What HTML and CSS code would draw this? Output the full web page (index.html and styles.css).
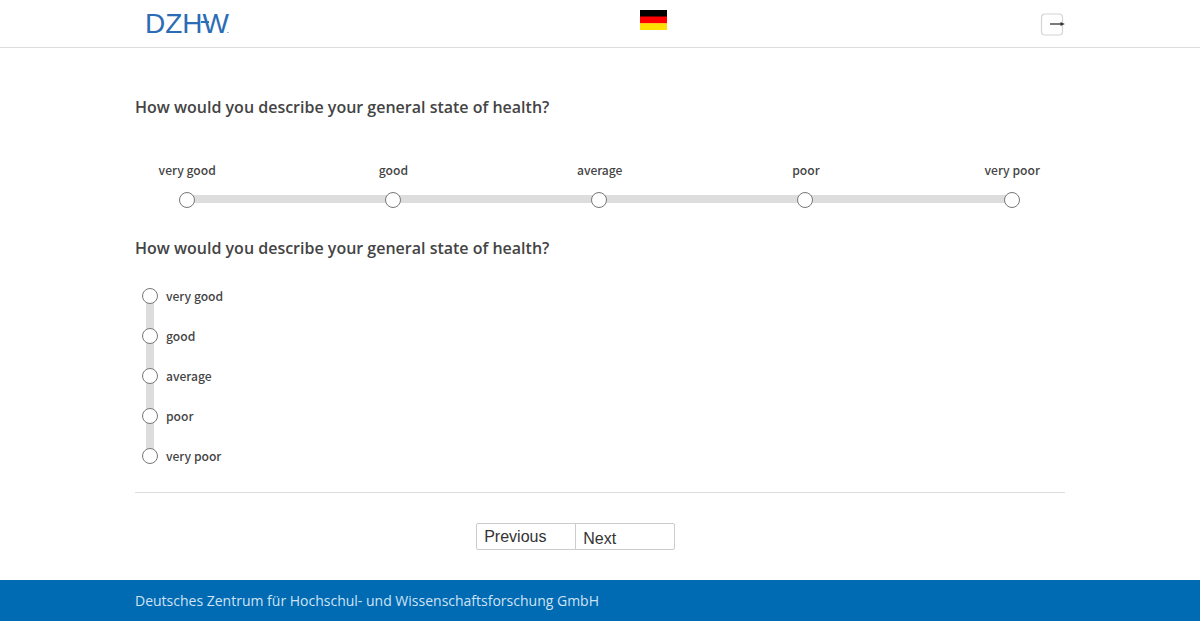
FILE: index.html
```html
<!DOCTYPE html>
<html lang="en">
<head>
<meta charset="utf-8">
<title>DZHW survey</title>
<link rel="stylesheet" href="styles.css">
</head>
<body>
<header class="site-header">
  <div class="header-inner">
    <div class="logo"><span class="logo-text">DZH</span><span class="logo-w">W</span><span class="logo-dot">.</span></div>
    <svg class="flag" width="27" height="20" viewBox="0 0 27 20" aria-label="Deutsch"><rect width="27" height="7" fill="#000"/><rect y="6.5" width="27" height="7" fill="#f00"/><rect y="13.3" width="27" height="6.7" fill="#ffdf00"/></svg>
    <svg class="logout" width="25" height="23" viewBox="0 0 25 23" aria-label="Logout">
      <rect x="1.5" y="1" width="21" height="21" rx="3.5" fill="#fff" stroke="#d4d4d4" stroke-width="1.2"/>
      <path d="M10 11H21" stroke="#333" stroke-width="1.3" fill="none"/>
      <path d="M20.5 9L24.8 11L20.5 13Z" fill="#333"/>
    </svg>
  </div>
</header>
<main class="content">
  <h2 class="question q-first">How would you describe your general state of health?</h2>
  <div class="hscale">
    <div class="hscale-track"></div>
    <div class="hscale-item"><span class="label">very good</span><span class="radio"></span></div>
    <div class="hscale-item"><span class="label">good</span><span class="radio"></span></div>
    <div class="hscale-item"><span class="label">average</span><span class="radio"></span></div>
    <div class="hscale-item"><span class="label">poor</span><span class="radio"></span></div>
    <div class="hscale-item"><span class="label">very poor</span><span class="radio"></span></div>
  </div>
  <h2 class="question q-second">How would you describe your general state of health?</h2>
  <div class="vscale">
    <div class="vscale-track"></div>
    <div class="vscale-item"><span class="radio"></span><span class="label">very good</span></div>
    <div class="vscale-item"><span class="radio"></span><span class="label">good</span></div>
    <div class="vscale-item"><span class="radio"></span><span class="label">average</span></div>
    <div class="vscale-item"><span class="radio"></span><span class="label">poor</span></div>
    <div class="vscale-item"><span class="radio"></span><span class="label">very poor</span></div>
  </div>
  <hr class="rule">
  <div class="pager">
    <button class="btn btn-prev" type="button">Previous</button><button class="btn btn-next" type="button">Next</button>
  </div>
</main>
<footer class="site-footer">
  <div class="footer-inner">Deutsches Zentrum für Hochschul- und Wissenschaftsforschung GmbH</div>
</footer>
</body>
</html>
```
FILE: styles.css
```css
* { box-sizing: border-box; }
html, body { margin: 0; padding: 0; background: #fff; }
body { font-family: "Open Sans", sans-serif; color: #444; }

.site-header { height: 48px; border-bottom: 1px solid #ddd; }
.header-inner { width: 930px; margin: 0 auto; height: 47px; position: relative; display: flex; justify-content: center; padding-left: 106px; }
.logo { position: absolute; left: 10px; top: 6px; display: flex; align-items: baseline; color: #2b6cb5; font-family: "Liberation Sans", sans-serif; font-size: 28px; line-height: 36px; }
.logo-w { position: relative; letter-spacing: -2.5px; }
.logo-w::after { content: ""; position: absolute; left: -2px; top: 15px; width: 8px; height: 2px; background: #2b6cb5; }
.logo-dot { font-size: 9px; }
.flag { margin-top: 10px; }
.logout { position: absolute; right: 0; top: 13px; }

.content { width: 930px; margin: 0 auto; }
.question { margin: 0; font-size: 16px; line-height: 22px; font-weight: 600; color: #444; }
.q-first { padding-top: 48px; }
.q-second { margin-top: 29px; }

.label { font-family: "Noto Sans CJK SC", "Noto Sans", sans-serif; font-size: 12.1px; line-height: 18px; font-weight: 500; color: #444; white-space: nowrap; }
.hscale-item .label { padding-left: 1px; }
.radio { display: block; width: 16px; height: 16px; border: 1px solid #777; border-radius: 50%; background: #fff; flex: none; position: relative; }

.hscale { margin-top: 43px; padding: 0 23.3px 0 21.7px; display: flex; justify-content: space-between; position: relative; }
.hscale-track { position: absolute; left: 52px; right: 53px; bottom: 5px; height: 8px; background: #ddd; }
.hscale-item { width: 60px; display: flex; flex-direction: column; align-items: center; gap: 13px; }

.vscale { margin-top: 17px; position: relative; }
.vscale-track { position: absolute; left: 11px; top: 20px; bottom: 20px; width: 8px; background: #ddd; }
.vscale-item { height: 40px; padding-left: 7px; display: flex; align-items: center; gap: 8px; position: relative; }

.rule { border: 0; border-top: 1px solid #ddd; margin: 16px 0 30px; }

.pager { display: flex; justify-content: center; padding-right: 50px; }
.btn { width: 100px; height: 27px; padding: 0 8px 0 7.7px; background: #fff; border: 1px solid #ccc; font-family: "Liberation Sans", sans-serif; font-size: 16px; color: #333; text-align: left; }
.btn-prev { border-radius: 2px 0 0 2px; }
.btn-next { margin-left: -1px; border-radius: 0 2px 2px 0; padding-top: 4px; }

.site-footer { margin-top: 30px; height: 41px; background: #006ab3; }
.footer-inner { width: 930px; margin: 0 auto; font-size: 14px; line-height: 41px; color: #cfe3f3; }
```
